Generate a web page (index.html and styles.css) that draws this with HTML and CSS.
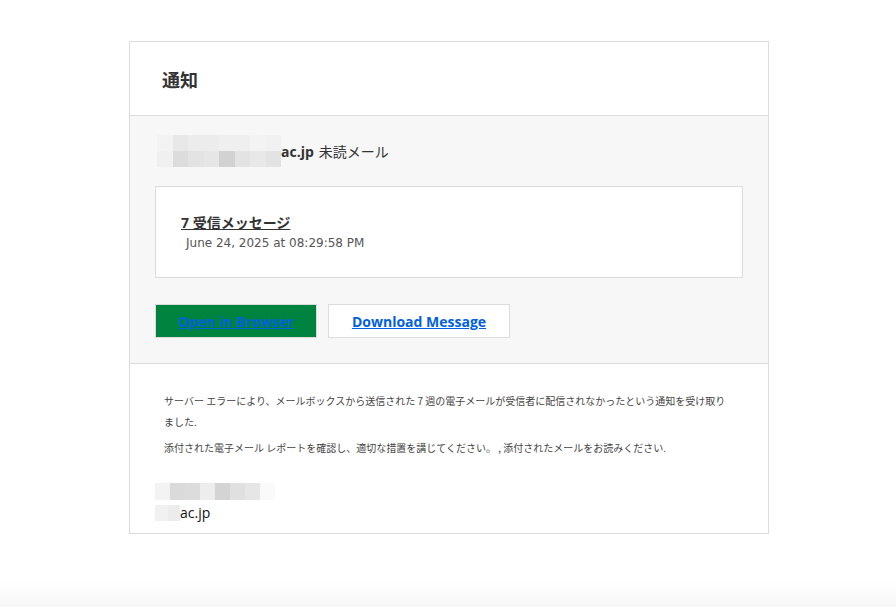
FILE: index.html
```html
<!DOCTYPE html>
<html lang="ja">
  <head>
    <meta charset="UTF-8" />
    <meta name="viewport" content="width=device-width, initial-scale=1.0" />
    <title>通知</title>
    <link rel="stylesheet" href="styles.css">
  </head>
  <body>
    <div class="notice-card">
      <div class="notice-header">
        <h1 class="notice-title">通知</h1>
      </div>

      <div class="notice-body">
        <div class="account-line">
          <span class="mosaic mosaic-account">
            <i style="background:#f3f3f3"></i><i style="background:#e8e8e8"></i><i style="background:#ececec"></i><i style="background:#ececec"></i><i style="background:#efefef"></i><i style="background:#efefef"></i><i style="background:#f3f3f3"></i><i style="background:#f1f1f1"></i>
            <i style="background:#f0f0f0"></i><i style="background:#dcdcdc"></i><i style="background:#e3e3e3"></i><i style="background:#e6e6e6"></i><i style="background:#d2d2d2"></i><i style="background:#e3e3e3"></i><i style="background:#e8e8e8"></i><i style="background:#e3e3e3"></i>
          </span>
          <span class="account-domain">ac.jp</span>
          <span class="account-label">未読メール</span>
        </div>

        <div class="message-box">
          <a href="#" class="message-title">7 受信メッセージ</a>
          <div class="message-date">June 24, 2025 at 08:29:58 PM</div>
        </div>

        <div class="actions">
          <a href="#" class="btn btn-open">Open in Browser</a>
          <a href="#" class="btn btn-download">Download Message</a>
        </div>
      </div>

      <div class="notice-footer">
        <p>サーバー エラーにより、メールボックスから送信された 7 週の電子メールが受信者に配信されなかったという通知を受け取りました.</p>
        <p>添付された電子メール レポートを確認し、適切な措置を講じてください。 , 添付されたメールをお読みください.</p>

        <div class="signature">
          <span class="mosaic mosaic-sign">
            <i style="background:#f3f3f3"></i><i style="background:#dadada"></i><i style="background:#dcdcdc"></i><i style="background:#ededed"></i><i style="background:#d4d4d4"></i><i style="background:#e0e0e0"></i><i style="background:#e6e6e6"></i><i style="background:#fafafa"></i>
          </span>
          <div class="sign-line">
            <span class="mosaic mosaic-short">
              <i style="background:#f1f1f1"></i><i style="background:#ececec"></i>
            </span>
            <span>ac.jp</span>
          </div>
        </div>
      </div>
    </div>
  </body>
</html>
```

FILE: styles.css
```css
* {
  margin: 0;
  padding: 0;
  box-sizing: border-box;
}

body {
  font-family: "Open Sans", "Noto Sans CJK JP", sans-serif;
  background: linear-gradient(to bottom, #fff 95.5%, #f6f6f6 100%);
  min-height: 100vh;
  color: #333;
  padding-top: 41px;
}

.notice-card {
  width: 640px;
  margin-left: calc(50% - 319px);
  border: 1px solid #dcdcdc;
  background: #fff;
}

.notice-header {
  height: 74px;
  padding: 0 32px;
  display: flex;
  align-items: center;
  border-bottom: 1px solid #dcdcdc;
}

.notice-title {
  font-size: 18px;
  font-weight: 700;
  color: #333;
  font-family: "Noto Sans CJK JP", sans-serif;
}

.notice-body {
  background: #f7f7f7;
  padding: 19px 25px 25px;
  border-bottom: 1px solid #dcdcdc;
}

.account-line {
  display: flex;
  align-items: center;
  font-size: 14px;
  color: #333;
  padding-left: 2px;
}

.mosaic {
  display: grid;
  flex-shrink: 0;
}

.mosaic i {
  display: block;
}

.mosaic-account {
  grid-template-columns: repeat(8, 15.5px);
  grid-auto-rows: 16px;
}

.account-domain {
  font-weight: 700;
}

.account-label {
  margin-left: 5px;
  font-family: "Noto Sans CJK JP", sans-serif;
}

.message-box {
  margin-top: 19px;
  background: #fff;
  border: 1px solid #dcdcdc;
  height: 92px;
  padding: 24px 25px 0;
}

.message-title {
  font-family: "Open Sans", "Noto Sans CJK JP", sans-serif;
  font-size: 14px;
  font-weight: 700;
  color: #333;
  text-decoration: underline;
}

.message-date {
  font-family: "DejaVu Sans", sans-serif;
  font-size: 12px;
  color: #555;
  margin-top: 3px;
  padding-left: 5px;
}

.actions {
  display: flex;
  gap: 11px;
  margin-top: 26px;
}

.btn {
  display: flex;
  align-items: center;
  justify-content: center;
  height: 34px;
  font-size: 14px;
  font-weight: 700;
  color: #0060df;
  text-decoration: underline;
  border: 1px solid #dcdcdc;
}

.btn-open {
  width: 162px;
  background: #00833e;
}

.btn-download {
  width: 182px;
  background: #fff;
}

.notice-footer {
  padding: 26px 34px 11px;
  font-family: "Noto Sans CJK JP", sans-serif;
  font-size: 10px;
  color: #444;
}

.notice-footer p {
  line-height: 21px;
  margin-bottom: 5px;
}

.signature {
  margin-top: 25px;
  margin-left: -9px;
  font-family: "Open Sans", sans-serif;
  font-size: 14px;
  color: #111;
}

.mosaic-sign {
  grid-template-columns: repeat(8, 15px);
  grid-auto-rows: 17px;
}

.sign-line {
  display: flex;
  align-items: center;
  margin-top: 3px;
}

.mosaic-short {
  grid-template-columns: repeat(2, 12.5px);
  grid-auto-rows: 16px;
}
```
